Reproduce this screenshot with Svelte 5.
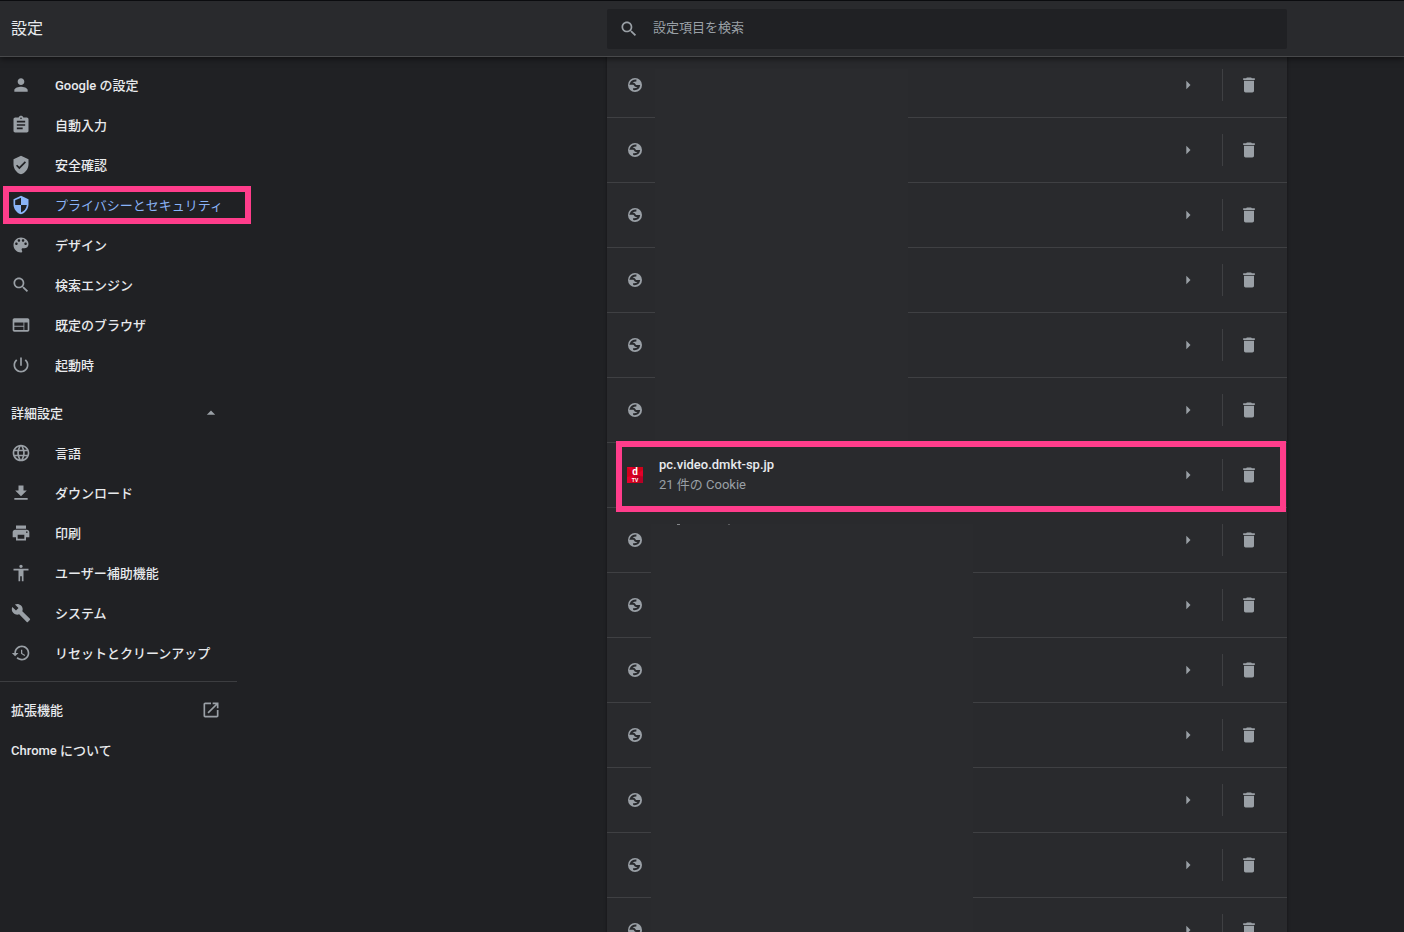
<script lang="ts">
	interface MenuItem {
		label: string;
		icon: string;
		selected?: boolean;
	}

	const icons: Record<string, string> = {
		person:
			'M12 12c2.21 0 4-1.79 4-4s-1.79-4-4-4-4 1.79-4 4 1.79 4 4 4zm0 2c-2.67 0-8 1.34-8 4v2h16v-2c0-2.66-5.33-4-8-4z',
		assignment:
			'M19 3h-4.18C14.4 1.84 13.3 1 12 1c-1.3 0-2.4.84-2.82 2H5c-1.1 0-2 .9-2 2v14c0 1.1.9 2 2 2h14c1.1 0 2-.9 2-2V5c0-1.1-.9-2-2-2zm-7 0c.55 0 1 .45 1 1s-.45 1-1 1-1-.45-1-1 .45-1 1-1zm2 14H7v-2h7v2zm3-4H7v-2h10v2zm0-4H7V7h10v2z',
		verified:
			'M12 1L3 5v6c0 5.55 3.84 10.74 9 12 5.16-1.26 9-6.45 9-12V5l-9-4zm-2 16l-4-4 1.41-1.41L10 14.17l6.59-6.59L18 9l-8 8z',
		security:
			'M12 1L3 5v6c0 5.55 3.84 10.74 9 12 5.16-1.26 9-6.45 9-12V5l-9-4zm0 10.99h7c-.53 4.12-3.28 7.79-7 8.94V12H5V6.3l7-3.11v8.8z',
		palette:
			'M12 3c-4.97 0-9 4.03-9 9s4.03 9 9 9c.83 0 1.5-.67 1.5-1.5 0-.39-.15-.74-.39-1.01-.23-.26-.38-.61-.38-.99 0-.83.67-1.5 1.5-1.5H16c2.76 0 5-2.24 5-5 0-4.42-4.03-8-9-8zm-5.5 9c-.83 0-1.5-.67-1.5-1.5S5.67 9 6.5 9 8 9.67 8 10.5 7.33 12 6.5 12zm3-4C8.67 8 8 7.33 8 6.5S8.67 5 9.5 5s1.5.67 1.5 1.5S10.33 8 9.5 8zm5 0c-.83 0-1.5-.67-1.5-1.5S13.67 5 14.5 5s1.5.67 1.5 1.5S15.33 8 14.5 8zm3 4c-.83 0-1.5-.67-1.5-1.5S16.67 9 17.5 9s1.5.67 1.5 1.5-.67 1.5-1.5 1.5z',
		search:
			'M15.5 14h-.79l-.28-.27C15.41 12.59 16 11.11 16 9.5 16 5.91 13.09 3 9.5 3S3 5.91 3 9.5 5.91 16 9.5 16c1.61 0 3.09-.59 4.23-1.57l.27.28v.79l5 4.99L20.49 19l-4.99-5zm-6 0C7.01 14 5 11.99 5 9.5S7.01 5 9.5 5 14 7.01 14 9.5 11.99 14 9.5 14z',
		web: 'M20 4H4c-1.1 0-1.99.9-1.99 2L2 18c0 1.1.9 2 2 2h16c1.1 0 2-.9 2-2V6c0-1.1-.9-2-2-2zm-5 14H4v-4h11v4zm0-5H4V9h11v4zm5 5h-4V9h4v9z',
		power:
			'M13 3h-2v10h2V3zm4.83 2.17l-1.42 1.42C17.99 7.86 19 9.81 19 12c0 3.87-3.13 7-7 7s-7-3.13-7-7c0-2.19 1.01-4.14 2.58-5.42L6.17 5.17C4.23 6.82 3 9.26 3 12c0 4.97 4.03 9 9 9s9-4.03 9-9c0-2.74-1.23-5.18-3.17-6.83z',
		language:
			'M11.99 2C6.47 2 2 6.48 2 12s4.47 10 9.99 10C17.52 22 22 17.52 22 12S17.52 2 11.99 2zm6.93 6h-2.95c-.32-1.25-.78-2.45-1.38-3.56 1.84.63 3.37 1.91 4.33 3.56zM12 4.04c.83 1.2 1.48 2.53 1.91 3.96h-3.82c.43-1.43 1.08-2.76 1.91-3.96zM4.26 14C4.1 13.36 4 12.69 4 12s.1-1.36.26-2h3.38c-.08.66-.14 1.32-.14 2 0 .68.06 1.34.14 2H4.26zm.82 2h2.95c.32 1.25.78 2.45 1.38 3.56-1.84-.63-3.37-1.9-4.33-3.56zm2.95-8H5.08c.96-1.66 2.49-2.93 4.33-3.56C8.81 5.55 8.35 6.75 8.03 8zM12 19.96c-.83-1.2-1.48-2.53-1.91-3.96h3.82c-.43 1.43-1.08 2.76-1.91 3.96zM14.34 14H9.66c-.09-.66-.16-1.32-.16-2 0-.68.07-1.35.16-2h4.68c.09.65.16 1.32.16 2 0 .68-.07 1.34-.16 2zm.25 5.56c.6-1.11 1.06-2.31 1.38-3.56h2.95c-.96 1.65-2.49 2.93-4.33 3.56zM16.36 14c.08-.66.14-1.32.14-2 0-.68-.06-1.34-.14-2h3.38c.16.64.26 1.31.26 2s-.1 1.36-.26 2h-3.38z',
		download: 'M19 9h-4V3H9v6H5l7 7 7-7zM4 18v2h16v-2H4z',
		print:
			'M19 8H5c-1.66 0-3 1.34-3 3v6h4v4h12v-4h4v-6c0-1.66-1.34-3-3-3zm-3 11H8v-5h8v5zm3-7c-.55 0-1-.45-1-1s.45-1 1-1 1 .45 1 1-.45 1-1 1zm-1-9H6v4h12V3z',
		accessibility:
			'M12 2c1.1 0 2 .9 2 2s-.9 2-2 2-2-.9-2-2 .9-2 2-2zm9 7h-6v13h-2v-6h-2v6H9V9H3V7h18v2z',
		build:
			'M22.7 19l-9.1-9.1c.9-2.3.4-5-1.5-6.9-2-2-5-2.4-7.4-1.3L9 6 6 9 1.6 4.7C.4 7.1.9 10.1 2.9 12.1c1.9 1.9 4.6 2.4 6.9 1.5l9.1 9.1c.4.4 1 .4 1.4 0l2.3-2.3c.5-.4.5-1.1.1-1.4z',
		restore:
			'M13 3c-4.97 0-9 4.03-9 9H1l3.89 3.89.07.14L9 12H6c0-3.87 3.13-7 7-7s7 3.13 7 7-3.13 7-7 7c-1.93 0-3.68-.79-4.94-2.06l-1.42 1.42C8.27 19.99 10.51 21 13 21c4.97 0 9-4.03 9-9s-4.03-9-9-9zm-1 5v5l4.28 2.54.72-1.21-3.5-2.08V8H12z',
		dropUp: 'M7 14l5-5 5 5z',
		launch:
			'M19 19H5V5h7V3H5c-1.11 0-2 .9-2 2v14c0 1.1.89 2 2 2h14c1.1 0 2-.9 2-2v-7h-2v7zM14 3v2h3.59l-9.83 9.83 1.41 1.41L19 6.41V10h2V3h-7z',
		arrowRight: 'M10 7l5 5-5 5z',
		trash: 'M6 19c0 1.1.9 2 2 2h8c1.1 0 2-.9 2-2V7H6v12zM19 4h-3.5l-1-1h-5l-1 1H5v2h14V4z'
	};

	const basic: MenuItem[] = [
		{ label: 'Google の設定', icon: 'person' },
		{ label: '自動入力', icon: 'assignment' },
		{ label: '安全確認', icon: 'verified' },
		{ label: 'プライバシーとセキュリティ', icon: 'security', selected: true },
		{ label: 'デザイン', icon: 'palette' },
		{ label: '検索エンジン', icon: 'search' },
		{ label: '既定のブラウザ', icon: 'web' },
		{ label: '起動時', icon: 'power' }
	];

	const advanced: MenuItem[] = [
		{ label: '言語', icon: 'language' },
		{ label: 'ダウンロード', icon: 'download' },
		{ label: '印刷', icon: 'print' },
		{ label: 'ユーザー補助機能', icon: 'accessibility' },
		{ label: 'システム', icon: 'build' },
		{ label: 'リセットとクリーンアップ', icon: 'restore' }
	];

	let showAdvanced = $state(true);
	let query = $state('');
</script>

{#snippet icon(name: string)}
	<svg class="icon" viewBox="0 0 24 24" aria-hidden="true"><path d={icons[name]} /></svg>
{/snippet}

{#snippet menu(items: MenuItem[])}
	{#each items as item}
		<a href="#settings" class="item" class:selected={item.selected}>
			{@render icon(item.icon)}
			<span>{item.label}</span>
		</a>
	{/each}
{/snippet}

{#snippet controls()}
	<button class="icon-button" aria-label="詳細">{@render icon('arrowRight')}</button>
	<span class="separator"></span>
	<button class="icon-button" aria-label="削除">{@render icon('trash')}</button>
{/snippet}

{#snippet hiddenSite()}
	<div class="row">
		<svg class="favicon" viewBox="0 0 16 16" aria-hidden="true">
			<circle cx="8" cy="8" r="7" fill="#9aa0a6" />
			<path
				d="M9.4 3.5C6.6 3.400 4.400 4.800 3.700 6.800H6.400C8.200 6.800 7.400 8.900 9 8.900H12C11.600 11.200 9.400 12.500 6.200 12.100"
				fill="none"
				stroke="#292a2d"
				stroke-width="2"
			/>
		</svg>
		<span class="site"></span>
		{@render controls()}
	</div>
{/snippet}

<div class="page">
	<header>
		<h1>設定</h1>
		<label class="search">
			{@render icon('search')}
			<input type="text" placeholder="設定項目を検索" aria-label="設定項目を検索" bind:value={query} />
		</label>
	</header>

	<div class="content">
		<nav>
			{@render menu(basic)}
			<button class="item toggle" onclick={() => (showAdvanced = !showAdvanced)}>
				<span>詳細設定</span>
				{@render icon('dropUp')}
			</button>
			{#if showAdvanced}
				{@render menu(advanced)}
			{/if}
			<hr />
			<a href="#extensions" class="item">
				<span>拡張機能</span>
				{@render icon('launch')}
			</a>
			<a href="#about" class="item"><span>Chrome について</span></a>
		</nav>

		<main>
			<div class="group">
				{#each Array.from({ length: 6 }) as _}
					{@render hiddenSite()}
				{/each}
				<div class="mask"></div>
			</div>

			<div class="row marked">
				<svg class="favicon" viewBox="0 0 16 16" aria-hidden="true">
					<rect width="16" height="16" fill="#d0021b" />
					<path d="M0 0h5l3 8zM16 3v6L8 8zM0 10l8-2-5 8H0z" fill="#e4002b" />
					<path d="M16 10v6h-5L8 8z" fill="#b80026" />
					<text x="8" y="8" font-size="10">d</text>
					<text x="8" y="15" font-size="5">TV</text>
				</svg>
				<div class="site">
					<div class="name">pc.video.dmkt-sp.jp</div>
					<div class="detail">21 件の Cookie</div>
				</div>
				{@render controls()}
			</div>

			<div class="group lower">
				{#each Array.from({ length: 7 }) as _}
					{@render hiddenSite()}
				{/each}
				<div class="mask"></div>
			</div>
		</main>
	</div>
</div>

<style>
	:global(body) {
		background: #202124;
	}

	.page {
		display: flex;
		flex-direction: column;
		height: 100vh;
		overflow: hidden;
		box-sizing: border-box;
		border-top: 1px solid #0b0c0f;
		color: #e8eaed;
		font: 500 13px/20px Roboto, 'Noto Sans CJK JP', sans-serif;
	}

	header,
	.content {
		display: grid;
		grid-template-columns: minmax(252px, 1fr) minmax(0, 680px) minmax(0, 117px);
	}

	header {
		position: relative;
		z-index: 2;
		align-items: center;
		flex: none;
		padding: 8px 0 7px;
		background: #292a2d;
		border-bottom: 1px solid #48494b;
		box-shadow: 0 2px 6px rgba(0, 0, 0, 0.5);
	}

	h1 {
		margin: 0;
		padding-left: 11px;
		font-size: 16px;
		font-weight: 400;
	}

	.search {
		display: flex;
		align-items: center;
		gap: 14px;
		height: 40px;
		padding: 0 12px;
		border-radius: 2px;
		background: #202124;
		box-sizing: border-box;
	}

	.search input {
		flex: 1;
		min-width: 0;
		padding: 0 0 2px;
		border: 0;
		outline: 0;
		background: none;
		color: #e8eaed;
		font: inherit;
		font-weight: 400;
	}

	.search input::placeholder {
		color: #9aa0a6;
		opacity: 1;
	}

	.icon {
		flex: none;
		width: 20px;
		height: 20px;
		fill: #9aa0a6;
	}

	.content {
		flex: 1;
		min-height: 0;
	}

	nav {
		width: 237px;
		padding-top: 8px;
	}

	.item {
		position: relative;
		display: flex;
		align-items: center;
		gap: 24px;
		width: 100%;
		height: 40px;
		padding: 0 16px 0 11px;
		border: 0;
		background: none;
		box-sizing: border-box;
		color: inherit;
		font: inherit;
		text-align: left;
		text-decoration: none;
		white-space: nowrap;
	}

	.item span {
		padding-top: 2px;
	}

	.item span + .icon {
		margin-left: auto;
	}

	.toggle {
		margin-top: 8px;
	}

	.selected {
		color: #8ab4f8;
		font-weight: 400;
	}

	.selected .icon {
		fill: #8ab4f8;
	}

	.selected::after,
	.marked::after {
		content: '';
		position: absolute;
		border: 6px solid #ff3d8b;
		pointer-events: none;
	}

	.selected::after {
		inset: 1px -14px 1px 3px;
	}

	.marked::after {
		inset: -2px 1px -5px 9px;
	}

	hr {
		margin: 8px 0;
		border: 0;
		border-top: 1px solid #3c3d40;
	}

	/* the list is scrolled slightly under the header */
	main {
		margin-top: -4px;
		background: #292a2d;
		box-shadow: 0 1px 3px rgba(0, 0, 0, 0.4);
	}

	.group {
		position: relative;
	}

	.row {
		position: relative;
		display: flex;
		align-items: center;
		height: 64px;
		padding: 0 20px;
		border-bottom: 1px solid #3f4043;
	}

	.marked {
		z-index: 1;
	}

	.favicon {
		flex: none;
		width: 16px;
		height: 16px;
		margin-right: 16px;
	}

	.favicon text {
		fill: #fff;
		font-family: Roboto, sans-serif;
		font-weight: 700;
		text-anchor: middle;
	}

	.site {
		flex: 1;
		min-width: 0;
	}

	.detail {
		color: #9aa0a6;
		font-weight: 400;
	}

	.icon-button {
		display: flex;
		align-items: center;
		justify-content: center;
		width: 36px;
		height: 36px;
		padding: 0;
		border: 0;
		background: none;
	}

	.separator {
		width: 1px;
		height: 32px;
		margin: 0 8px 0 16px;
		background: #3f4043;
	}

	.mask {
		position: absolute;
		inset: 16px auto 0 48px;
		width: 253px;
		background: #2a2b2e;
	}

	.lower .mask {
		left: 44px;
		width: 322px;
	}

	/* tips of the covered site name */
	.lower .mask::before,
	.lower .mask::after {
		content: '';
		position: absolute;
		left: 26px;
		width: 3px;
		height: 1px;
		background: #85878a;
	}

	.lower .mask::after {
		left: 77px;
		width: 2px;
		background: #5a5b5e;
	}
</style>
